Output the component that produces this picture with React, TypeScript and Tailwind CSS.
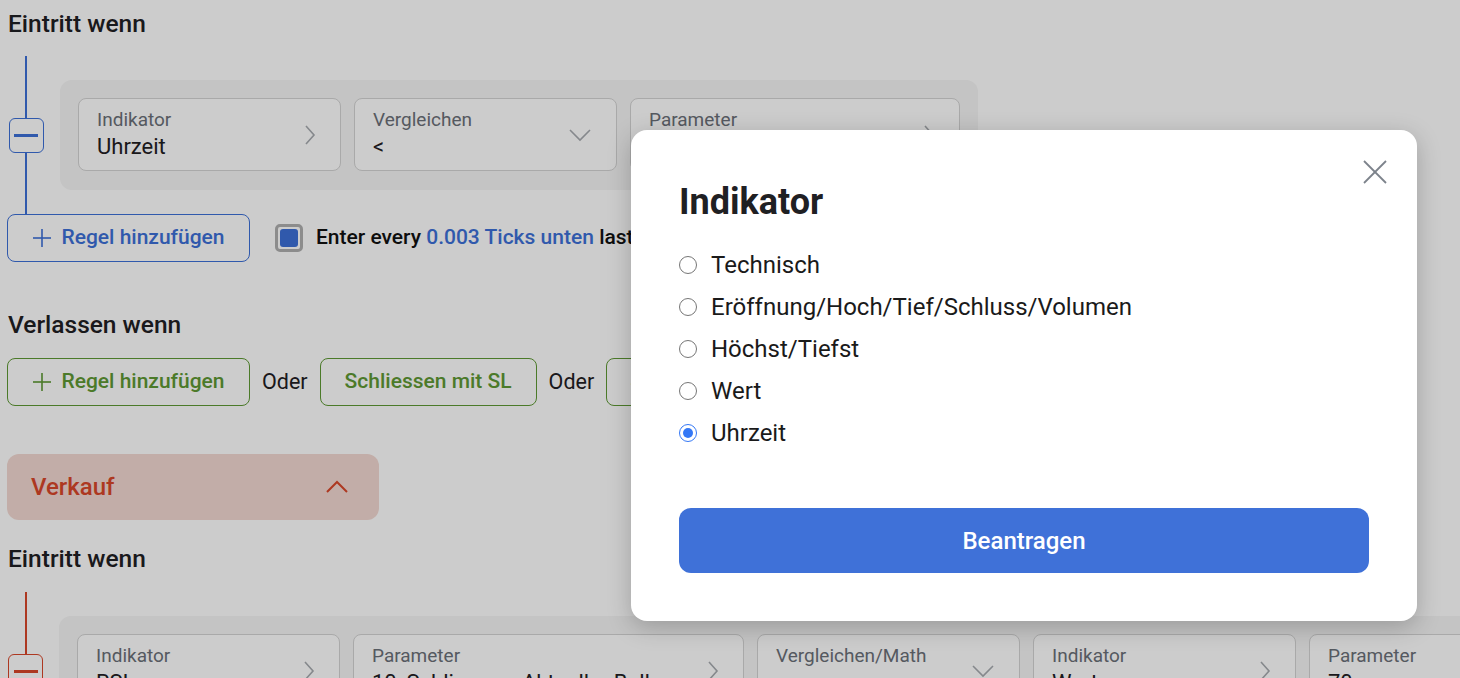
import React from 'react';

const ChevronRight = () => (
  <svg width="12" height="22" viewBox="0 0 12 22" fill="none" stroke="#a7abb0" strokeWidth="1.6">
    <polyline points="2,2 10,11 2,20" />
  </svg>
);

const ChevronDown = () => (
  <svg width="24" height="14" viewBox="0 0 24 14" fill="none" stroke="#a7abb0" strokeWidth="1.6">
    <polyline points="2,2 12,12 22,2" />
  </svg>
);

type FieldProps = { label: string; value: string; width: string; kind: 'right' | 'down' };

const Field: React.FC<FieldProps> = ({ label, value, width, kind }) => (
  <div className={`${width} h-[73px] shrink-0 rounded-lg border border-[#d4d4d4] bg-white pl-[18px] pr-[24px] flex items-center justify-between`}>
    <div className="flex flex-col min-w-0">
      <span className="text-[19px] leading-[22px] text-[#6b7078]">{label}</span>
      <span className="mt-[2px] text-[22px] leading-[28px] text-[#1f2023] whitespace-nowrap">{value}</span>
    </div>
    {kind === 'right' ? <ChevronRight /> : <ChevronDown />}
  </div>
);

const RuleBlock: React.FC<{ color: 'blue' | 'red'; children: React.ReactNode }> = ({ color, children }) => {
  const line = color === 'blue' ? 'bg-[#3d70d8]' : 'bg-[#d9472a]';
  const border = color === 'blue' ? 'border-[#3d70d8]' : 'border-[#d9472a]';
  return (
    <div className="flex">
      <div className="w-[36px] flex flex-col items-center">
        <div className={`w-[2px] flex-1 ${line}`} />
        <div className={`w-[35px] h-[35px] rounded-[6px] border ${border} bg-white flex items-center justify-center`}>
          <div className={`w-[24px] h-[3px] ${line}`} />
        </div>
        <div className={`w-[2px] flex-1 ${line}`} />
      </div>
      <div className="ml-[16px] py-[24px]">
        <div className="flex gap-[13px] rounded-xl bg-[#f5f5f5] px-[18px] pt-[18px] pb-[19px] w-max">{children}</div>
      </div>
    </div>
  );
};

const PlusIcon = ({ color }: { color: string }) => (
  <svg width="20" height="20" viewBox="0 0 20 20" fill="none" stroke={color} strokeWidth="1.6">
    <line x1="10" y1="1" x2="10" y2="19" />
    <line x1="1" y1="10" x2="19" y2="10" />
  </svg>
);

export default function App() {
  const options = ['Technisch', 'Eröffnung/Hoch/Tief/Schluss/Volumen', 'Höchst/Tiefst', 'Wert', 'Uhrzeit'];
  const selected = 'Uhrzeit';

  return (
    <div className="relative h-screen w-screen overflow-hidden bg-white font-['Roboto',sans-serif]">
      <div className="pl-[8px] pt-[10px]">
        <h2 className="text-[24.5px] leading-[28px] font-medium text-[#1f2023]">Eintritt wenn</h2>

        <div className="mt-[18px]">
          <RuleBlock color="blue">
            <Field label="Indikator" value="Uhrzeit" width="w-[263px]" kind="right" />
            <Field label="Vergleichen" value="<" width="w-[263px]" kind="down" />
            <Field label="Parameter" value="09:30" width="w-[330px]" kind="right" />
          </RuleBlock>
        </div>

        <div className="flex items-center">
          <button className="-ml-px w-[243px] h-[48px] rounded-lg border border-[#3d70d8] bg-white flex items-center justify-center gap-[9px] text-[21px] font-medium text-[#3d70d8]">
            <PlusIcon color="#3d70d8" />
            Regel hinzufügen
          </button>
          <div className="ml-[25px] w-[28px] h-[28px] rounded-[5px] border-[3px] border-[#b0b0b0] bg-white p-[2px]">
            <div className="w-full h-full rounded-[3px] bg-[#3d70d8]" />
          </div>
          <span className="ml-[13px] text-[21px] font-medium text-[#111] whitespace-nowrap">
            Enter every <span className="text-[#3d70d8]">0.003 Ticks unten</span> last 5 Balken
          </span>
        </div>

        <h2 className="mt-[49px] text-[24.5px] leading-[28px] font-medium text-[#1f2023]">Verlassen wenn</h2>

        <div className="mt-[19px] flex items-center gap-[12px]">
          <button className="-ml-px w-[243px] h-[48px] rounded-lg border border-[#5e9934] bg-white flex items-center justify-center gap-[9px] text-[21px] font-medium text-[#5e9934]">
            <PlusIcon color="#5e9934" />
            Regel hinzufügen
          </button>
          <span className="text-[21.5px] text-[#1f2023]">Oder</span>
          <button className="w-[217px] h-[48px] rounded-lg border border-[#5e9934] bg-white text-[21px] font-medium text-[#5e9934]">
            Schliessen mit SL
          </button>
          <span className="text-[21.5px] text-[#1f2023]">Oder</span>
          <button className="w-[217px] h-[48px] rounded-lg border border-[#5e9934] bg-white text-[21px] font-medium text-[#5e9934]">
            Schliessen mit TP
          </button>
        </div>

        <div className="mt-[48px] -ml-px w-[372px] h-[66px] rounded-xl bg-[#f3d9d2] pl-[24px] pr-[30px] flex items-center justify-between">
          <span className="text-[24px] font-medium text-[#d9472a]">Verkauf</span>
          <svg width="24" height="14" viewBox="0 0 24 14" fill="none" stroke="#d9472a" strokeWidth="2">
            <polyline points="2,12 12,2 22,12" />
          </svg>
        </div>

        <h2 className="mt-[25px] text-[24.5px] leading-[28px] font-medium text-[#1f2023]">Eintritt wenn</h2>

        <div className="mt-[19px]">
          <RuleBlock color="red">
            <Field label="Indikator" value="RSI" width="w-[263px]" kind="right" />
            <Field label="Parameter" value="10, Schliessen, Aktueller Balken" width="w-[391px]" kind="right" />
            <Field label="Vergleichen/Math" value=">" width="w-[263px]" kind="down" />
            <Field label="Indikator" value="Wert" width="w-[263px]" kind="right" />
            <Field label="Parameter" value="70" width="w-[263px]" kind="right" />
          </RuleBlock>
        </div>
      </div>

      <div className="absolute inset-0 bg-black/20" />

      <div className="absolute left-[631px] top-[130px] w-[786px] rounded-2xl bg-white px-[48px] pt-[52px] pb-[48px] shadow-[0_6px_24px_rgba(0,0,0,0.22)]">
        <button className="absolute right-[28px] top-[28px] w-[28px] h-[28px] flex items-center justify-center">
          <svg width="26" height="26" viewBox="0 0 26 26" fill="none" stroke="#7c828b" strokeWidth="1.8">
            <line x1="2" y1="2" x2="24" y2="24" />
            <line x1="24" y1="2" x2="2" y2="24" />
          </svg>
        </button>
        <h1 className="text-[36px] leading-[40px] font-bold text-[#1f2023]">Indikator</h1>
        <div className="mt-[22px] flex flex-col">
          {options.map((o) => (
            <label key={o} className="h-[42px] flex items-center gap-[14px] text-[24px] text-[#1a1a1a]">
              {o === selected ? (
                <span className="w-[18px] h-[18px] rounded-full border-[1.5px] border-[#3478f6] flex items-center justify-center">
                  <span className="w-[10px] h-[10px] rounded-full bg-[#3478f6]" />
                </span>
              ) : (
                <span className="w-[18px] h-[18px] rounded-full border-[1.5px] border-[#767676]" />
              )}
              {o}
            </label>
          ))}
        </div>
        <button className="mt-[54px] w-full h-[65px] rounded-xl bg-[#3f71d8] text-[24px] font-medium text-white">
          Beantragen
        </button>
      </div>
    </div>
  );
}
